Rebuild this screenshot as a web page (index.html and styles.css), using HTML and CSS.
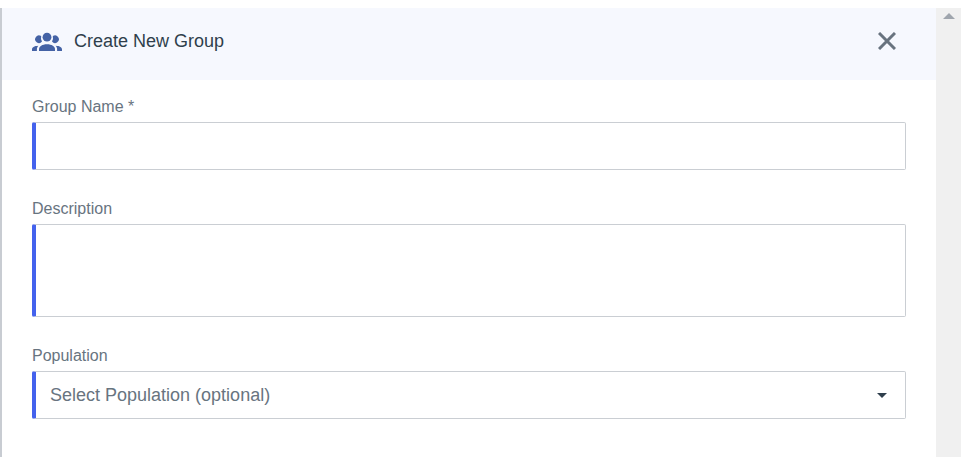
FILE: index.html
```html
<!DOCTYPE html>
<html lang="en">
  <head>
    <meta charset="UTF-8" />
    <meta name="viewport" content="width=device-width, initial-scale=1.0" />
    <title>Create New Group</title>
    <link rel="stylesheet" href="styles.css">
  </head>
  <body>
    <div class="drawer">
      <main class="panel">
        <header class="panel-header">
          <svg class="group-icon" width="30" height="20" viewBox="0 0 30 20" aria-hidden="true">
            <circle cx="15" cy="6.2" r="4.4" />
            <path d="M9.2 5.1a6.6 6.6 0 0 0 .8 5.4A3.8 3.8 0 1 1 9.2 5.1z" />
            <path d="M20.8 5.1a6.6 6.6 0 0 1-.8 5.4A3.8 3.8 0 1 0 20.8 5.1z" />
            <path d="M7 20v-1.6c0-3 3.2-5.2 8-5.2s8 2.2 8 5.2V20z" />
            <path d="M0 20v-1.4c0-2.2 2-3.6 6.4-3.8-1 1-1.5 2.2-1.5 3.6V20z" />
            <path d="M30 20v-1.4c0-2.2-2-3.6-6.4-3.8 1 1 1.5 2.2 1.5 3.6V20z" />
          </svg>
          <h1>Create New Group</h1>
          <button type="button" class="close" aria-label="Close">
            <svg width="18" height="18" viewBox="0 0 18 18" aria-hidden="true">
              <path d="M1 1l16 16M17 1L1 17" />
            </svg>
          </button>
        </header>

        <form class="group-form">
          <div class="field">
            <label for="name">Group Name *</label>
            <input type="text" id="name" required />
          </div>
          <div class="field">
            <label for="description">Description</label>
            <textarea id="description"></textarea>
          </div>
          <div class="field">
            <label for="population">Population</label>
            <div class="select-wrap">
              <select id="population">
                <option value="">Select Population (optional)</option>
              </select>
              <svg class="caret" width="10" height="5" viewBox="0 0 10 5" aria-hidden="true">
                <path d="M0 0h10L5 5z" />
              </svg>
            </div>
          </div>
        </form>
      </main>

      <div class="scrollbar">
        <svg width="12" height="6" viewBox="0 0 12 6" aria-hidden="true">
          <path d="M0 6h12L6 0z" />
        </svg>
      </div>
    </div>
  </body>
</html>
```
FILE: styles.css
```css
* {
  box-sizing: border-box;
}
body {
  margin: 0;
  padding-top: 8px;
  background: #fff;
  color: #2f3f4c;
  font-family: "Liberation Sans", Arial, sans-serif;
}
.drawer {
  display: flex;
  min-height: calc(100vh - 8px);
  border-left: 2px solid #c8ccd2;
}
.panel {
  flex: 1;
}
.panel-header {
  display: flex;
  align-items: center;
  height: 72px;
  padding: 0 40px 6px 30px;
  background: #f6f8fe;
}
.group-icon {
  fill: #4462a5;
}
h1 {
  flex: 1;
  margin: 0 0 0 12px;
  font-size: 18px;
  font-weight: normal;
}
.close {
  display: flex;
  padding: 0;
  border: none;
  background: none;
  cursor: pointer;
}
.close path {
  fill: none;
  stroke: #68737f;
  stroke-width: 3;
}
.group-form {
  display: flex;
  flex-direction: column;
  gap: 28px;
  padding: 16px 30px;
}
label {
  display: block;
  margin-bottom: 4px;
  color: #68747f;
  font-size: 16px;
  line-height: 22px;
}
input,
textarea,
select {
  display: block;
  width: 100%;
  height: 48px;
  padding: 0 14px;
  border: 1px solid #caced3;
  border-left: 4px solid #4462ed;
  border-radius: 2px;
  background: #fff;
  color: #68747f;
  font-family: inherit;
  font-size: 18px;
}
textarea {
  height: 93px;
  padding: 12px 14px;
  resize: none;
}
select {
  appearance: none;
}
.select-wrap {
  display: grid;
  align-items: center;
}
.select-wrap > * {
  grid-area: 1 / 1;
}
.caret {
  justify-self: end;
  margin-right: 19px;
  fill: #2f3f4c;
  pointer-events: none;
}
.scrollbar {
  width: 25px;
  padding: 5px 0 0 7px;
  background: #f0f0f0;
}
.scrollbar svg {
  display: block;
  fill: #9fa5ad;
}
```
